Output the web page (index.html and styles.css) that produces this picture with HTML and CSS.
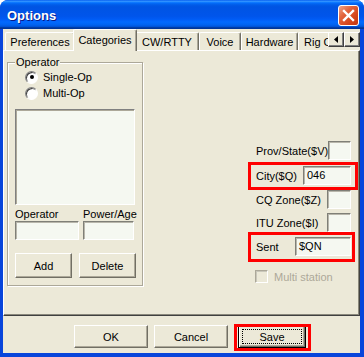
FILE: index.html
```html
<!DOCTYPE html>
<html lang="en">
<head>
    <meta charset="UTF-8">
    <title>Options</title>
    <link rel="stylesheet" href="styles.css">
</head>
<body>
    <div class="window">
        <div class="titlebar">
            <span class="title">Options</span>
            <div class="close">
                <svg width="19" height="19" viewBox="0 0 19 19"><path d="M5 5L14 14M14 5L5 14" stroke="#fff" stroke-width="2.4" stroke-linecap="square"/></svg>
            </div>
        </div>
        <div class="client">
            <div class="tabrow">
                <div class="tabs">
                    <div class="tab tab-pref">Preferences</div>
                    <div class="tab tab-active">Categories</div>
                    <div class="tab tab-cw">CW/RTTY</div>
                    <div class="tab tab-voice">Voice</div>
                    <div class="tab tab-hw">Hardware</div>
                    <div class="tab tab-rig">Rig Control</div>
                </div>
                <div class="tab-scroll">
                    <div class="scroll-btn"><svg width="4" height="7" viewBox="0 0 4 7"><path d="M4 0V7L0 3.5Z"/></svg></div>
                    <div class="scroll-btn"><svg width="4" height="7" viewBox="0 0 4 7"><path d="M0 0V7L4 3.5Z"/></svg></div>
                </div>
            </div>
            <div class="panel">
                <fieldset class="group">
                    <legend>Operator</legend>
                    <div class="radio"><span class="radio-dot checked"></span>Single-Op</div>
                    <div class="radio"><span class="radio-dot"></span>Multi-Op</div>
                    <div class="listbox"></div>
                    <div class="op-grid">
                        <span>Operator</span>
                        <span>Power/Age</span>
                        <div class="textbox"></div>
                        <div class="textbox"></div>
                    </div>
                    <div class="btn-grid">
                        <div class="btn">Add</div>
                        <div class="btn">Delete</div>
                    </div>
                </fieldset>
                <div class="fields">
                    <div class="field-row">
                        <span>Prov/State($V)</span>
                        <div class="textbox box-s"></div>
                    </div>
                    <div class="field-row mark mark-city">
                        <span>City($Q)</span>
                        <div class="textbox box-m">046</div>
                    </div>
                    <div class="field-row row-cq">
                        <span>CQ Zone($Z)</span>
                        <div class="textbox box-s"></div>
                    </div>
                    <div class="field-row row-itu">
                        <span>ITU Zone($I)</span>
                        <div class="textbox box-s"></div>
                    </div>
                    <div class="field-row mark mark-sent">
                        <span>Sent</span>
                        <div class="textbox box-l">$QN</div>
                    </div>
                    <div class="check-row">
                        <span class="checkbox"></span>Multi station
                    </div>
                </div>
            </div>
            <div class="footer">
                <div class="btn btn-wide">OK</div>
                <div class="btn btn-wide">Cancel</div>
                <div class="btn btn-default mark mark-save"><span>Save</span></div>
            </div>
        </div>
    </div>
</body>
</html>
```

FILE: styles.css
```css
* {
    box-sizing: border-box;
}
body {
    margin: 0;
    background: #fff;
    font-family: "Liberation Sans", Arial, sans-serif;
    font-size: 11px;
    color: #000;
}
.window {
    width: 364px;
    height: 357px;
    background: #0845db;
    border-radius: 8px 8px 0 0;
    display: flex;
    flex-direction: column;
    overflow: hidden;
}
.titlebar {
    height: 29px;
    flex: none;
    display: flex;
    align-items: center;
    justify-content: space-between;
    padding: 1px 5px 0 7px;
    background: linear-gradient(to bottom, #0058ee 0%, #3593ff 4%, #288eff 6%, #127dff 8%, #036ffc 10%, #0262ee 14%, #0057e5 20%, #0054e3 24%, #0055eb 56%, #005bf5 66%, #026afe 76%, #0062ef 86%, #0052d6 92%, #0040ab 94%, #003092 100%);
}
.title {
    color: #fff;
    font-weight: bold;
    font-size: 13px;
    text-shadow: 1px 1px 0 #0a1a86;
}
.close {
    width: 21px;
    height: 21px;
    border: 1px solid #fff;
    border-radius: 3px;
    background: linear-gradient(135deg, #f0a488 0%, #e2643c 35%, #d4461c 70%, #c03610 100%);
    display: flex;
}
.client {
    flex: 1;
    margin: 0 4px 4px 3px;
    background: #ece9d8;
    display: flex;
    flex-direction: column;
}

/* tabs */
.tabrow {
    height: 22px;
    margin-bottom: -1px;
    display: flex;
    padding-left: 2px;
    position: relative;
    z-index: 1;
}
.tabs {
    width: 323px;
    height: 22px;
    display: flex;
    align-items: flex-end;
    overflow: hidden;
}
.tab {
    flex: none;
    height: 18px;
    margin-bottom: 1px;
    line-height: 16px;
    padding-top: 1px;
    text-align: center;
    white-space: nowrap;
    background: #ece9d8;
    border-top: 1px solid #fff;
    border-left: 1px solid #fff;
    border-right: 1px solid #716f64;
    box-shadow: inset -1px 0 0 #aca899;
    border-radius: 2px 2px 0 0;
}
.tab-pref { width: 70px; }
.tab-active {
    width: 64px;
    height: 22px;
    margin: 0 -2px 0 -2px;
    line-height: 18px;
    position: relative;
    z-index: 1;
}
.tab-cw { width: 64px; }
.tab-voice { width: 42px; }
.tab-hw { width: 57px; }
.tab-rig { width: 70px; text-align: left; padding-left: 5px; }
.tab-scroll {
    display: flex;
    margin-top: 3px;
}
.scroll-btn {
    width: 16px;
    height: 15px;
    background: #ece9d8;
    border: 1px solid;
    border-color: #fff #404040 #404040 #fff;
    box-shadow: inset -1px -1px 0 #808080;
    display: flex;
    align-items: center;
    justify-content: center;
}

/* panel */
.panel {
    height: 266px;
    display: flex;
    align-items: flex-start;
    background: #ece9d8;
    border-top: 1px solid #fff;
    border-left: 1px solid #fff;
    border-right: 1px solid #404040;
    border-bottom: 1px solid #404040;
    box-shadow: inset -1px -1px 0 #8a887c;
}
.group {
    width: 136px;
    margin: 5px 0 0 3px;
    padding: 0 7px 7px 7px;
    min-width: 0;
    border: 1px solid #aca899;
    box-shadow: inset 1px 1px 0 #fff, 1px 1px 0 #fff;
}
.group legend {
    padding: 0 1px;
    line-height: 13px;
    background: #ece9d8;
}
.radio {
    height: 16px;
    display: flex;
    align-items: center;
    gap: 5px;
    padding-left: 10px;
}
.radio-dot {
    width: 13px;
    height: 13px;
    border-radius: 50%;
    border: 1px solid;
    border-color: #808080 #fff #fff #808080;
    background: #fff;
    box-shadow: inset 1px 1px 0 #404040;
    display: flex;
    align-items: center;
    justify-content: center;
}
.radio-dot.checked::before {
    content: "";
    width: 4px;
    height: 4px;
    border-radius: 50%;
    background: #000;
}
.listbox {
    margin-top: 8px;
    height: 96px;
    background: #f5f8f1;
    border: 1px solid;
    border-color: #808080 #fff #fff #808080;
    box-shadow: inset 1px 1px 0 #aca899;
}
.op-grid {
    margin-top: 3px;
    display: grid;
    grid-template-columns: 64px 51px;
    grid-template-rows: 13px 19px;
    column-gap: 4px;
    line-height: 13px;
}
.textbox {
    height: 19px;
    background: #f5f8f1;
    border: 1px solid;
    border-color: #7f7f77 #fff #fff #7f7f77;
    box-shadow: inset 1px 1px 0 #b8b6ab;
    padding: 0 3px;
    line-height: 17px;
}
.btn-grid {
    margin-top: 13px;
    display: grid;
    grid-template-columns: 57px 57px;
    column-gap: 7px;
}
.btn {
    height: 25px;
    background: #ece9d8;
    border: 1px solid;
    border-color: #fff #716f64 #716f64 #fff;
    box-shadow: inset -1px -1px 0 #aca899;
    display: flex;
    align-items: center;
    justify-content: center;
}

/* right column */
.fields {
    width: 95px;
    margin: 90px 0 0 113px;
}
.field-row {
    height: 19px;
    display: flex;
    align-items: center;
    justify-content: space-between;
    position: relative;
}
.box-s { width: 24px; }
.box-m { width: 48px; }
.box-l { width: 56px; }
.mark-city { margin-top: 6px; }
.row-cq { margin-top: 5px; }
.row-itu { margin-top: 4px; }
.mark-sent { margin-top: 5px; }
.mark::after {
    content: "";
    position: absolute;
    border: 3px solid #f00;
}
.mark-city::after { inset: -4px -7px -5px -8px; }
.mark-sent::after { inset: -5px -4px -6px -8px; }
.check-row {
    margin-top: 14px;
    height: 13px;
    display: flex;
    align-items: center;
    gap: 6px;
    margin-left: -1px;
    color: #aca899;
}
.checkbox {
    width: 13px;
    height: 13px;
    border: 1px solid;
    border-color: #aca899 #fff #fff #aca899;
    box-shadow: inset 1px 1px 0 #c9c7ba;
}

/* footer */
.footer {
    display: flex;
    gap: 6px;
    padding: 9px 0 0 71px;
}
.btn-wide {
    width: 74px;
    height: 23px;
}
.btn-default {
    width: 68px;
    height: 23px;
    margin-left: 4px;
    border: 1px solid #000;
    box-shadow: inset 1px 1px 0 #fff, inset -1px -1px 0 #716f64, inset -2px -2px 0 #aca899;
    padding: 3px;
    position: relative;
}
.btn-default span {
    flex: 1;
    height: 100%;
    border: 1px dotted #000;
    display: flex;
    align-items: center;
    justify-content: center;
}
.mark-save::after { inset: -2px -6px -4px -5px; }
```
